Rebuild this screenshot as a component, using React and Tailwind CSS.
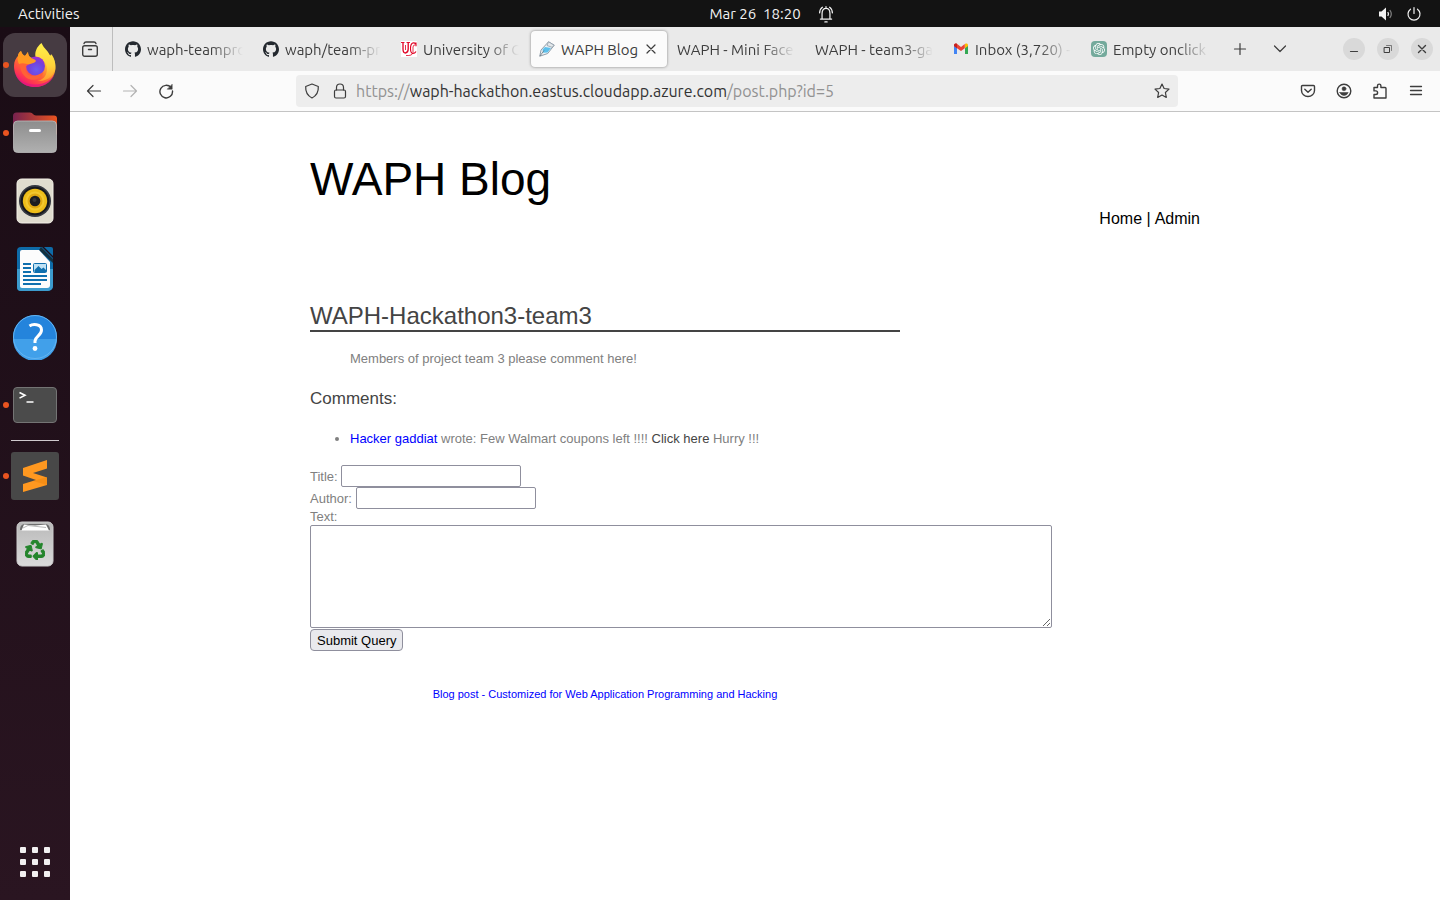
import React from "react";
import { SiGithub, SiOpenai } from "react-icons/si";
import { FaRecycle } from "react-icons/fa";

/* ---------- Dock icons ---------- */

function FirefoxIcon() {
  return (
    <svg viewBox="0 0 44 46" className="h-[46px] w-11" aria-hidden="true">
      <defs>
        <linearGradient id="ffBody" x1="0.85" y1="0.1" x2="0.2" y2="0.95">
          <stop offset="0" stopColor="#fff44f" />
          <stop offset="0.3" stopColor="#ffb02c" />
          <stop offset="0.55" stopColor="#ff6a33" />
          <stop offset="0.8" stopColor="#ff3750" />
          <stop offset="1" stopColor="#e5127d" />
        </linearGradient>
        <linearGradient id="ffFlame" x1="0.5" y1="0" x2="0.5" y2="1">
          <stop offset="0" stopColor="#fff14a" />
          <stop offset="0.6" stopColor="#ffd23a" />
          <stop offset="1" stopColor="#ff9a2e" />
        </linearGradient>
        <radialGradient id="ffGlobe" cx="0.55" cy="0.7" r="0.7">
          <stop offset="0" stopColor="#6a5cf0" />
          <stop offset="0.6" stopColor="#7540d8" />
          <stop offset="1" stopColor="#a32bd2" />
        </radialGradient>
      </defs>
      <path d="M8 9c1 3 2 4 4 5l3-4c0 3 1 5 4 6l18-3c5 4 6 10 5.500 14C41 38 32 45 22 45 10 45 1 36 1 24c0-5 2-8 4-10 0-2 1-4 3-5z" fill="url(#ffBody)" />
      <path d="M2 30c3 9 11 12.500 20 12.500 9 0 17-4 20-12C40 40 31 45 22 45 12 45 4 39 2 30z" fill="#e3157f" opacity="0.75" />
      <path d="M28.500 1c-5 4-7 9-6 14 5 0 10 4 11 9 2 8-3 14-9 15 10 1 18-6 17.500-17-.2-5-2-8-4-10l-.5 3C36 9 31 7 28.500 1z" fill="url(#ffFlame)" />
      <circle cx="22.500" cy="24" r="9.500" fill="url(#ffGlobe)" />
      <path d="M7 19c3-2 6-2.500 8-2 2 .6 4 1.500 5 2.500-1 2-3 2-4.500 3-2 1-3 2-3 4 0 6 6 9 11 7 3-1 5-3 7-3-2 6-8 8-13 7C11 36 6 29 7 19z" fill="#ff6236" />
      <path d="M8 9c1 3 2 4 4 5l3-4c0 3 1 5 3 6 2 1 4 1 5 3-1 2-4 2-6 3-3 1-6-2-11 0C4 18 4 12 8 9z" fill="#ff9a22" />
    </svg>
  );
}

function FilesIcon() {
  return (
    <svg viewBox="0 0 46 42" className="h-[42px] w-[46px]" aria-hidden="true">
      <defs>
        <linearGradient id="folderBack" x1="0" y1="0" x2="1" y2="0">
          <stop offset="0" stopColor="#77224f" />
          <stop offset="1" stopColor="#e95420" />
        </linearGradient>
        <linearGradient id="folderFront" x1="0" y1="0" x2="0" y2="1">
          <stop offset="0" stopColor="#8d8d8d" />
          <stop offset="1" stopColor="#b0b0b0" />
        </linearGradient>
      </defs>
      <path d="M1 4a3.500 3.500 0 0 1 3.500-3.500H18c3 0 3 3 6 3h18a3 3 0 0 1 3 3v16H1z" fill="url(#folderBack)" />
      <rect x="1.500" y="9" width="43" height="31.500" rx="4" fill="url(#folderFront)" stroke="#bdbdbd" strokeWidth="0.800" />
      <rect x="17" y="17" width="12" height="3" rx="1.500" fill="#fff" />
    </svg>
  );
}

function SpeakerIcon() {
  return (
    <svg viewBox="0 0 38 46" className="h-[46px] w-[38px]" aria-hidden="true">
      <rect x="1" y="1" width="36" height="44" rx="4.500" fill="#e0dccf" stroke="#f4f1e8" />
      <circle cx="19" cy="23" r="16" fill="#353841" />
      <circle cx="19" cy="23" r="14.300" fill="#17181c" />
      <circle cx="19" cy="23" r="12.200" fill="#eebd19" />
      <circle cx="19" cy="23" r="9.500" fill="#f3c830" />
      <circle cx="19" cy="23" r="7.500" fill="#e1a911" />
      <circle cx="19" cy="23" r="5.300" fill="#1d1d20" />
      <circle cx="18.500" cy="22" r="2" fill="#38383b" />
    </svg>
  );
}

function WriterIcon() {
  return (
    <svg viewBox="0 0 38 46" className="h-[46px] w-[38px]" aria-hidden="true">
      <path d="M5 1h21l11 11v28a5 5 0 0 1-5 5H5a4 4 0 0 1-4-4V5a4 4 0 0 1 4-4z" fill="#0e6ba8" />
      <path d="M1 23h36v17a5 5 0 0 1-5 5H5a4 4 0 0 1-4-4z" fill="#3c9bcd" />
      <path d="M25 1 37 13v4L23 4z" fill="#12303f" />
      <path d="M6 4h17l11 12v23a3 3 0 0 1-3 3H6a2 2 0 0 1-2-2V6a2 2 0 0 1 2-2z" fill="#fcfcfc" />
      <path d="M28 1h7a2 2 0 0 1 2 2v7z" fill="#0e6ba8" />
      <path d="M7 18h8M7 22h8M7 26h8M7 30h24M7 34h24M7 38h18" stroke="#0f6fae" strokeWidth="2" />
      <rect x="17.500" y="17.500" width="13" height="9" rx="1" fill="#bfe2f5" stroke="#0f6fae" />
      <path d="M18.500 26v-2l4-4 3 3 2-1.500 3 3V26z" fill="#0f6fae" />
    </svg>
  );
}

function HelpIcon() {
  return (
    <svg viewBox="0 0 46 46" className="size-[46px]" aria-hidden="true">
      <circle cx="23" cy="23" r="22" fill="#2484dc" />
      <path d="M1 25a22 22 0 0 0 44 0z" fill="#41a0ea" />
      <circle cx="23" cy="23" r="21.500" fill="none" stroke="#64b5f2" />
      <path d="M17.500 12c3-2 12-2.500 12 4 0 5.500-6 6-6.500 11v2" fill="none" stroke="#fff" strokeWidth="3" />
      <circle cx="23" cy="34.500" r="2.400" fill="#fff" />
    </svg>
  );
}

function TerminalIcon() {
  return (
    <svg viewBox="0 0 46 38" className="h-[38px] w-[46px]" aria-hidden="true">
      <rect x="1.500" y="1.500" width="43" height="35" rx="3.500" fill="#4b4b4b" stroke="#747474" />
      <path d="M7.500 6.500l5.500 2.800-5.500 2.800M14.500 16h7" fill="none" stroke="#fff" strokeWidth="1.600" />
    </svg>
  );
}

function SublimeIcon() {
  return (
    <svg viewBox="0 0 48 48" className="size-12" aria-hidden="true">
      <rect width="48" height="48" rx="3" fill="#484848" />
      <path d="M36 8v8.500L22 21l14 4.500V33l-24 7v-8l13-4-13-4.500V16z" fill="#ff9820" />
      <path d="M22 29l14-4v8z" fill="#e8820c" opacity="0.45" />
    </svg>
  );
}

function TrashIcon() {
  return (
    <svg viewBox="0 0 38 46" className="h-[46px] w-[38px]" aria-hidden="true">
      <defs>
        <linearGradient id="bin" x1="0" y1="0" x2="0" y2="1">
          <stop offset="0" stopColor="#b9b9b9" />
          <stop offset="1" stopColor="#dadada" />
        </linearGradient>
      </defs>
      <rect x="1" y="1" width="36" height="44" rx="5" fill="url(#bin)" stroke="#cdcdcd" />
      <path d="M4 9c0-4 2-6 5-6h20c3 0 5 2 5 6z" fill="#6d6d6d" />
      <path d="M5.500 9.500 8 3.500l11 1 11-1 3 6z" fill="#fff" />
      <path d="M7 7l5-2.500 18 2" fill="none" stroke="#9b9b9b" strokeWidth="0.700" />
      <FaRecycle x="9" y="19" size={20} color="#24852c" stroke="#24852c" strokeWidth="26" />
    </svg>
  );
}

function AppsIcon() {
  return (
    <svg viewBox="0 0 30 30" className="size-[30px]" fill="#f2f0f1" aria-hidden="true">
      {[0, 12, 24].map((y) =>
        [0, 12, 24].map((x) => <rect key={`${x}-${y}`} x={x} y={y} width="6" height="6" rx="1" />)
      )}
    </svg>
  );
}

/* ---------- Browser icons ---------- */

function Line({ children, className = "size-4", width = "1.2" }) {
  return (
    <svg
      viewBox="0 0 16 16"
      className={className}
      fill="none"
      stroke="currentColor"
      strokeWidth={width}
      strokeLinecap="round"
      strokeLinejoin="round"
      aria-hidden="true"
    >
      {children}
    </svg>
  );
}

function UcIcon() {
  return (
    <svg viewBox="0 0 16 16" className="size-4 shrink-0" aria-hidden="true">
      <rect width="16" height="16" fill="#fff" />
      <g fill="none" stroke="#e00122">
        <path d="M0 1.500h3.500M5.500 1.500H9" strokeWidth="0.900" />
        <path d="M2 1.500v6.500q0 4 2.500 4M7.200 1.500v6.500q0 3.500-2.700 4" strokeWidth="1.300" />
        <path d="M15 1.500v3.800M15 3q-1.500-1.500-3.300-1Q9.500 3 9.500 7.500t2.200 5Q14 12.500 15 10.500" strokeWidth="1.100" />
        <path d="M5 14.500q6.500.5 7-3V6q.3-2.300 2.500-2.300M4.500 4v5" strokeWidth="0.800" />
      </g>
    </svg>
  );
}

function BlogIcon() {
  return (
    <svg viewBox="0 0 16 16" className="size-4 shrink-0" aria-hidden="true">
      <path d="M.8 15.200 2 9 9.500.8l5.700 3.400-6.500 8.300z" fill="#eef2f4" stroke="#8593a0" strokeWidth="0.900" />
      <path d="M3.500 8.500 6 6l6 1-3.500 4.500-4.300.2z" fill="#5cc0ec" />
      <path d="M9.500.8 8 4.500l5 1.800 2.200-2z" fill="#e3e8eb" stroke="#8593a0" strokeWidth="0.700" />
      <path d="M.8 15.200 5 9.500" stroke="#67727c" strokeWidth="0.800" />
    </svg>
  );
}

function GmailIcon() {
  return (
    <svg viewBox="0 0 16 16" className="size-4 shrink-0" aria-hidden="true">
      <path d="M1 4.500V13h3V6.500z" fill="#4285f4" />
      <path d="M12 6.500V13h3V4.500z" fill="#34a853" />
      <path d="M1 4.500C1 2.500 3 2 4.200 3L8 6l3.800-3v4.200L8 10 4 7.200 1 5z" fill="#ea4335" />
      <path d="M12 3c1.200-1 3-.5 3 1.500V5l-3 2.200z" fill="#fbbc04" />
      <path d="M1 4.500C1 3 2.500 2 4 3v4.200L1 5z" fill="#c5221f" />
    </svg>
  );
}

function ChatIcon() {
  return (
    <span className="flex size-4 shrink-0 items-center justify-center rounded-sm bg-[#74aa9c] text-white">
      <SiOpenai className="size-3" aria-hidden="true" />
    </span>
  );
}

const github = <SiGithub className="size-4 shrink-0 text-[#24292f]" aria-hidden="true" />;

const TABS = [
  { title: "waph-teampro", icon: github },
  { title: "waph/team-pr", icon: github },
  { title: "University of C", icon: <UcIcon /> },
  { title: "WAPH Blog", icon: <BlogIcon />, active: true },
  { title: "WAPH - Mini Facel" },
  { title: "WAPH - team3-ga" },
  { title: "Inbox (3,720) -", icon: <GmailIcon /> },
  { title: "Empty onclick", icon: <ChatIcon /> },
];

const DOCK = [
  { name: "Firefox", icon: <FirefoxIcon />, running: true, active: true },
  { name: "Files", icon: <FilesIcon />, running: true },
  { name: "Rhythmbox", icon: <SpeakerIcon /> },
  { name: "Writer", icon: <WriterIcon /> },
  { name: "Help", icon: <HelpIcon /> },
  { name: "Terminal", icon: <TerminalIcon />, running: true },
];

function DockItem({ name, icon, running, active }) {
  return (
    <button
      type="button"
      aria-label={name}
      className={`relative flex size-16 items-center justify-center rounded-xl ${active ? "bg-[#463b42]" : ""}`}
    >
      {running && <span className="absolute top-1/2 left-0 size-1.5 -translate-y-1/2 rounded-full bg-[#e95420]" />}
      {icon}
    </button>
  );
}

function TopBar() {
  return (
    <header className="grid h-[27px] shrink-0 grid-cols-3 items-center bg-[#131313] px-[18px] text-[15px] leading-5 text-[#f2f2f2]">
      <button type="button" className="justify-self-start">Activities</button>
      <div className="flex items-center gap-4 justify-self-center pl-[104px] whitespace-pre">
        <span>Mar 26  18:20</span>
        <Line className="size-[18px]" width="1.1">
          <path d="M3 12.500h10M4.500 12V7.500C4.500 4.500 6 3 8 3s3.500 1.500 3.500 4.500V12M8 3V1.500" />
          <path d="M2.300 7q.2-3.500 2.500-5M13.700 7q-.2-3.500-2.500-5" />
          <path d="M7 15h2" width="2" />
        </Line>
      </div>
      <div className="flex items-center gap-3 justify-self-end">
        <svg viewBox="0 0 16 16" className="size-4" fill="none" stroke="currentColor" aria-hidden="true">
          <path d="M1 5.500h2.500L8 1.500v13l-4.500-4H1z" fill="currentColor" stroke="none" />
          <path d="M9.800 6q1.400 2 0 4" strokeWidth="1.300" />
          <path d="M11.800 4q3 4 0 8" strokeWidth="1.200" opacity="0.500" />
        </svg>
        <Line>
          <path d="M4.500 3.200a6 6 0 1 0 7 0M8 1.500v6" />
        </Line>
      </div>
    </header>
  );
}

function Dock() {
  return (
    <nav
      aria-label="Dock"
      className="flex w-[70px] shrink-0 flex-col items-center gap-1 bg-linear-to-b from-[#1a0c15] to-[#2a1521] pt-1.5 pb-1.5"
    >
      {DOCK.map((item) => (
        <DockItem key={item.name} {...item} />
      ))}
      <hr className="-my-px h-px w-12 border-0 bg-[#cfc9cd]" />
      <DockItem name="Sublime Text" icon={<SublimeIcon />} running />
      <DockItem name="Trash" icon={<TrashIcon />} />
      <div className="mt-auto">
        <DockItem name="Show Applications" icon={<AppsIcon />} />
      </div>
    </nav>
  );
}

function Tab({ title, icon, active }) {
  return (
    <div
      className={`mx-px flex h-9 w-[136px] shrink-0 items-center rounded-sm pr-2.5 pl-2 ${
        active ? "bg-[#fbfbfb] shadow-[0_0_3px_rgba(0,0,0,0.45)]" : ""
      }`}
    >
      <button type="button" className="flex min-w-0 flex-1 items-center gap-1.5 text-left">
        {icon}
        <span
          className={`min-w-0 flex-1 pt-0.5 whitespace-nowrap ${
            active ? "" : "mask-[linear-gradient(to_left,transparent,black_32px)]"
          }`}
        >
          {title}
        </span>
      </button>
      {active && (
        <button type="button" aria-label="Close tab" className="-mr-0.5">
          <Line>
            <path d="M4 4l8 8M12 4l-8 8" />
          </Line>
        </button>
      )}
    </div>
  );
}

function WindowButton({ label, children }) {
  return (
    <button type="button" aria-label={label} className="flex size-[22px] items-center justify-center rounded-full bg-[#d9d9d9]">
      {children}
    </button>
  );
}

function TabBar() {
  return (
    <div className="flex h-11 items-center bg-[#eaeaea] pr-[7px] text-[15px] leading-5 text-[#3d3d3d]">
      <button type="button" aria-label="Firefox View" className="flex h-full w-[43px] items-center justify-center border-r border-[#bdbdbd] pr-0.5">
        <svg viewBox="0 0 18 18" className="size-[18px]" fill="none" stroke="currentColor" strokeWidth="1.400" strokeLinecap="round" aria-hidden="true">
          <rect x="1.700" y="5.700" width="14.600" height="10.600" rx="2" />
          <path d="M3 3.500q.5-1.500 2-1.500h8q1.500 0 2 1.500M7.500 9.500h3" />
        </svg>
      </button>
      <div className="flex min-w-0 pl-[3px]">
        {TABS.map((tab) => (
          <Tab key={tab.title} {...tab} />
        ))}
      </div>
      <div className="flex items-center gap-6 pl-3">
        <button type="button" aria-label="New tab">
          <Line>
            <path d="M8 2.500v11M2.500 8h11" />
          </Line>
        </button>
        <button type="button" aria-label="List all tabs">
          <Line>
            <path d="M2.500 5 8 10.500 13.500 5" />
          </Line>
        </button>
      </div>
      <div className="ml-auto flex gap-3">
        <WindowButton label="Minimize">
          <Line>
            <path d="M4.500 10.500h7" />
          </Line>
        </WindowButton>
        <WindowButton label="Restore">
          <Line width="1">
            <path d="M4.500 6.500h5v5h-5z" />
            <path d="M6.500 4.500h5v5" opacity="0.600" />
          </Line>
        </WindowButton>
        <WindowButton label="Close">
          <Line width="1.400">
            <path d="M4.500 4.500l7 7M11.500 4.500l-7 7" />
          </Line>
        </WindowButton>
      </div>
    </div>
  );
}

function ToolBar() {
  return (
    <div className="flex h-[41px] items-center border-b border-[#c4c4c4] bg-[#fbfbfb] px-4 text-[#3d3d3d]">
      <div className="flex gap-5">
        <button type="button" aria-label="Back">
          <Line>
            <path d="M14.500 8h-13M7 2.500 1.500 8 7 13.500" />
          </Line>
        </button>
        <button type="button" aria-label="Forward" className="text-[#b3b3b3]">
          <Line>
            <path d="M1.500 8h13M9 2.500 14.500 8 9 13.500" />
          </Line>
        </button>
        <button type="button" aria-label="Reload">
          <Line width="1.400">
            <path d="M13 4.500A6.300 6.300 0 1 0 14.500 8" />
            <path d="M14.200 1.500v4.700H9.500z" fill="currentColor" strokeWidth="0.500" />
          </Line>
        </button>
      </div>
      <div className="mx-auto flex h-8 w-[882px] items-center rounded-sm bg-[#ededed] px-2 text-base leading-6">
        <Line>
          <path d="M8 1 14.300 3.500q.5 8-6.300 11.500Q1.200 11.500 1.700 3.500z" />
        </Line>
        <Line className="ml-3 size-4">
          <rect x="2.500" y="7" width="11" height="8" rx="1.500" />
          <path d="M4.500 7V4.500a3.500 3.500 0 0 1 7 0V7" />
        </Line>
        <div className="min-w-0 flex-1 pl-2 text-[#929292]">
          https://<span className="text-[#333]">waph-hackathon.eastus.cloudapp.azure.com</span>/post.php?id=5
        </div>
        <button type="button" aria-label="Bookmark this page">
          <Line>
            <path d="M8 1l2.100 4.500 4.900.6-3.600 3.400.9 4.900L8 12l-4.300 2.400.9-4.900L1 6.100l4.900-.6z" />
          </Line>
        </button>
      </div>
      <div className="flex gap-5">
        <button type="button" aria-label="Save to Pocket">
          <Line width="1.400">
            <path d="M2.500 2.500h11q1 0 1 1v4a6.500 6 0 0 1-13 0v-4q0-1 1-1zM4.800 6.200 8 9.200l3.200-3" />
          </Line>
        </button>
        <button type="button" aria-label="Account">
          <Line width="1.400">
            <circle cx="8" cy="8" r="6.800" />
            <circle cx="8" cy="5.800" r="2" fill="currentColor" strokeWidth="0.500" />
            <path d="M3.800 9.500h8.400Q11 12.500 8 12.500T3.800 9.500z" fill="currentColor" strokeWidth="0.500" />
          </Line>
        </button>
        <button type="button" aria-label="Extensions">
          <Line width="1.400">
            <path d="M5.500 4.500V2.800a1.700 1.700 0 0 1 3.400 0v1.700h4.200q.9 0 .9.900V15H2v-3.500h1.800a1.800 1.800 0 0 0 0-3.600H2V4.500z" />
          </Line>
        </button>
        <button type="button" aria-label="Open application menu">
          <Line width="1.300">
            <path d="M2.500 3.500h11M2.500 7.500h11M2.500 11.500h11" />
          </Line>
        </button>
      </div>
    </div>
  );
}

function BlogPage() {
  const field = "h-[22px] w-[180px] rounded-xs border border-[#8f8f9d] bg-white px-1 text-black";
  return (
    <main className="flex-1 bg-white font-['Liberation_Sans',Arial,sans-serif] text-[13px] leading-4 text-[#808080]">
      <div className="mx-auto w-full max-w-[890px] pt-10">
        <h1 className="text-[46px] leading-[54px] text-black">WAPH Blog</h1>
        <nav aria-label="Blog" className="flex justify-end gap-1 pt-px text-base leading-6 text-black">
          <span>
            <a href="#home">Home</a> |
          </span>
          <a href="#admin">Admin</a>
        </nav>
        <div className="max-w-[590px] pt-[71px]">
          <h2 className="border-b-2 border-[#444] text-2xl leading-7 text-[#444]">WAPH-Hackathon3-team3</h2>
          <p className="pt-[19px] pl-10">Members of project team 3 please comment here!</p>
          <h3 className="pt-[21px] text-[17px] leading-[22px] text-[#444]">Comments:</h3>
          <ul className="list-disc pt-[21px] pl-10">
            <li>
              <a href="#author" className="text-[#0000ff]">Hacker gaddiat</a> wrote: Few Walmart coupons left !!!!{" "}
              <a href="#coupon" className="text-[#444]">Click here</a> Hurry !!!
            </li>
          </ul>
        </div>
        <form className="pt-[18px]" onSubmit={(e) => e.preventDefault()}>
          <div className="flex items-center gap-[3px]">
            <label htmlFor="title" className="pt-0.5">Title:</label>
            <input id="title" type="text" className={field} />
          </div>
          <div className="flex items-center gap-1">
            <label htmlFor="author" className="pt-0.5">Author:</label>
            <input id="author" type="text" className={field} />
          </div>
          <label htmlFor="text" className="block">Text:</label>
          <textarea id="text" className="block h-[103px] w-[742px] max-w-full rounded-xs border border-[#8f8f9d] bg-white p-1 text-black" />
          <button type="submit" className="mt-px h-[22px] rounded-sm border border-[#8f8f9d] bg-[#e9e9ed] px-1.5 pt-0.5 text-[13px] text-black">
            Submit Query
          </button>
        </form>
        <footer className="max-w-[590px] pt-[35px] text-center text-[11px] text-[#0000ff]">
          <a href="#blog">Blog post - Customized for Web Application Programming and Hacking</a>
        </footer>
      </div>
    </main>
  );
}

export default function App() {
  return (
    <div className="flex min-h-screen flex-col font-[Ubuntu,'Noto_Sans',sans-serif]">
      <TopBar />
      <div className="flex flex-1">
        <Dock />
        <div className="flex min-w-0 flex-1 flex-col">
          <TabBar />
          <ToolBar />
          <BlogPage />
        </div>
      </div>
    </div>
  );
}
